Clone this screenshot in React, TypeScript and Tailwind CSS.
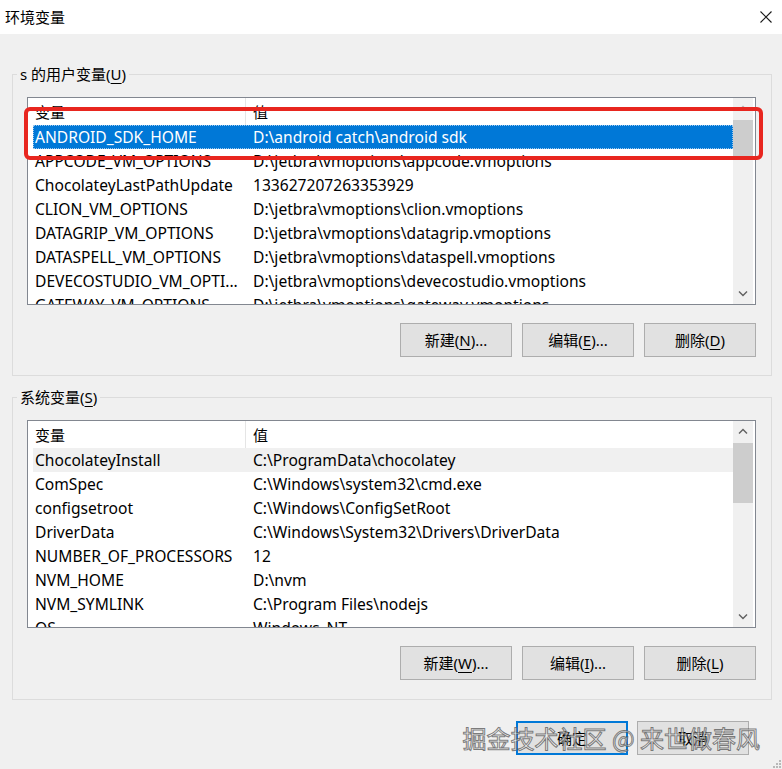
import clsx from 'clsx';

const userVars: [string, string][] = [
  ['ANDROID_SDK_HOME', 'D:\\android catch\\android sdk'],
  ['APPCODE_VM_OPTIONS', 'D:\\jetbra\\vmoptions\\appcode.vmoptions'],
  ['ChocolateyLastPathUpdate', '133627207263353929'],
  ['CLION_VM_OPTIONS', 'D:\\jetbra\\vmoptions\\clion.vmoptions'],
  ['DATAGRIP_VM_OPTIONS', 'D:\\jetbra\\vmoptions\\datagrip.vmoptions'],
  ['DATASPELL_VM_OPTIONS', 'D:\\jetbra\\vmoptions\\dataspell.vmoptions'],
  ['DEVECOSTUDIO_VM_OPTI...', 'D:\\jetbra\\vmoptions\\devecostudio.vmoptions'],
  ['GATEWAY_VM_OPTIONS', 'D:\\jetbra\\vmoptions\\gateway.vmoptions'],
];

const sysVars: [string, string][] = [
  ['ChocolateyInstall', 'C:\\ProgramData\\chocolatey'],
  ['ComSpec', 'C:\\Windows\\system32\\cmd.exe'],
  ['configsetroot', 'C:\\Windows\\ConfigSetRoot'],
  ['DriverData', 'C:\\Windows\\System32\\Drivers\\DriverData'],
  ['NUMBER_OF_PROCESSORS', '12'],
  ['NVM_HOME', 'D:\\nvm'],
  ['NVM_SYMLINK', 'C:\\Program Files\\nodejs'],
  ['OS', 'Windows_NT'],
];

const Chevron = ({ up, faint }: { up?: boolean; faint?: boolean }) => (
  <svg width="10" height="6" viewBox="0 0 10 6" className={faint ? 'text-[#b4b4b4]' : 'text-[#606060]'}>
    <path d={up ? 'M1 5.5L5 1.5L9 5.5' : 'M1 0.5L5 4.5L9 0.5'} fill="none" stroke="currentColor" strokeWidth="1.4" />
  </svg>
);

function VarList({
  rows,
  selected,
  hover,
  thumbTop,
  thumbHeight,
  faintUp,
}: {
  rows: [string, string][];
  selected?: number;
  hover?: number;
  thumbTop: number;
  thumbHeight: number;
  faintUp?: boolean;
}) {
  return (
    <div className="flex h-[208px] border border-[#828790] bg-white overflow-hidden">
      <div className="flex-1 min-w-0 pl-[5px]">
        {/* Header */}
        <div className="flex h-[27px]">
          <div className="w-[213px] border-r border-[#e5e5e5] pl-[2px] pt-[4px] leading-[20px]">变量</div>
          <div className="pl-[7px] pt-[4px] leading-[20px]">值</div>
        </div>

        {/* Rows */}
        {rows.map(([name, value], i) => (
          <div
            key={name}
            className={clsx(
              'flex h-[24px] items-center whitespace-nowrap leading-[20px] text-[15.6px]',
              i === selected && 'bg-[#0078d7] text-white outline-1 outline-dotted -outline-offset-1 outline-[#9cc8ef]',
              i === hover && 'bg-[#f0f0f0]'
            )}
          >
            <div className="w-[218px] shrink-0 pl-[2px]">{name}</div>
            <div className="pl-[2px]">{value}</div>
          </div>
        ))}
      </div>

      {/* Scrollbar */}
      <div className="w-[20px] mr-[2px] bg-[#f0f0f0] flex flex-col">
        <div className="h-[20px] flex items-center justify-center">
          <Chevron up faint={faintUp} />
        </div>
        <div className="flex-1">
          <div className="bg-[#cdcdcd]" style={{ marginTop: thumbTop, height: thumbHeight }} />
        </div>
        <div className="h-[20px] flex items-center justify-center">
          <Chevron />
        </div>
      </div>
    </div>
  );
}

const WinButton = ({ children, primary }: { children: React.ReactNode; primary?: boolean }) => (
  <button
    className={clsx(
      'w-[112px] h-[34px] bg-[#e1e1e1] flex items-center justify-center text-[15px] leading-none text-black',
      primary ? 'border-2 border-[#0078d7]' : 'border border-[#adadad]'
    )}
  >
    {children}
  </button>
);

const Key = ({ k }: { k: string }) => <u className="underline-offset-[3px] decoration-1">{k}</u>;

function Group({
  label,
  hotkey,
  rows,
  selected,
  hover,
  thumbTop,
  thumbHeight,
  faintUp,
  buttons,
  children,
  className = '',
}: {
  label: string;
  hotkey: string;
  rows: [string, string][];
  selected?: number;
  hover?: number;
  thumbTop: number;
  thumbHeight: number;
  faintUp?: boolean;
  buttons: [string, string, string][];
  children?: React.ReactNode;
  className?: string;
}) {
  return (
    <fieldset className={`border border-[#dcdcdc] ${className}`}>
      <legend className="ml-[4px] px-[3px] text-[15px] leading-[20px] text-black">
        {label}(<Key k={hotkey} />)
      </legend>
      <div className="pl-[14px] pr-[15px]">
        <div className="relative mt-[13px]">
          <VarList
            rows={rows}
            selected={selected}
            hover={hover}
            thumbTop={thumbTop}
            thumbHeight={thumbHeight}
            faintUp={faintUp}
          />
          {children}
        </div>
        <div className="flex justify-end gap-[10px] mt-[18px]">
          {buttons.map(([a, k, b]) => (
            <WinButton key={a + k}>
              {a}(<Key k={k} />){b}
            </WinButton>
          ))}
        </div>
      </div>
    </fieldset>
  );
}

export default function App() {
  return (
    <div className="w-[782px] h-[769px] bg-[#f0f0f0] overflow-hidden relative font-['Segoe_UI','Noto_Sans','Noto_Sans_CJK_SC',sans-serif] text-[15px] text-black">
      {/* Title bar */}
      <div className="h-[34px] bg-white flex items-center justify-between pl-[5px] pr-[10px]">
        <span className="text-[15px] leading-none">环境变量</span>
        <svg width="12" height="12" viewBox="0 0 12 12" className="text-[#1a1a1a]">
          <path d="M0.5 0.5L11.5 11.5M11.5 0.5L0.5 11.5" stroke="currentColor" strokeWidth="1.1" />
        </svg>
      </div>

      <div className="pl-[12px] pr-[10px] pt-[30px]">
        <Group
          label="s 的用户变量"
          hotkey="U"
          rows={userVars}
          selected={0}
          thumbTop={2}
          thumbHeight={38}
          faintUp
          buttons={[
            ['新建', 'N', '...'],
            ['编辑', 'E', '...'],
            ['删除', 'D', ''],
          ]}
          className="pb-[18px]"
        >
          {/* red highlight mark */}
          <div className="absolute left-[-3px] top-[10px] w-[739px] h-[53px] border-4 border-[#e8261f] rounded-[6px]" />
        </Group>

        <Group
          label="系统变量"
          hotkey="S"
          rows={sysVars}
          hover={0}
          thumbTop={2}
          thumbHeight={60}
          buttons={[
            ['新建', 'W', '...'],
            ['编辑', 'I', '...'],
            ['删除', 'L', ''],
          ]}
          className="mt-[11px] pb-[19px]"
        />
      </div>

      {/* Bottom buttons */}
      <div className="relative flex justify-end gap-[9px] pr-[33px] mt-[21px]">
        <WinButton primary>确定</WinButton>
        <WinButton>取消</WinButton>
        <span className="absolute right-[22px] top-[1px] text-[24px] leading-[32px] text-white/60 [-webkit-text-stroke:1px_rgba(70,70,70,0.7)] font-['Noto_Sans_CJK_SC',sans-serif] whitespace-nowrap">
          掘金技术社区 @ 来世做春风
        </span>
      </div>

      {/* resize grip */}
      <svg width="8" height="8" viewBox="0 0 8 8" className="absolute right-[1px] bottom-[1px] text-[#b8b8b8]">
        <rect x="6" y="0" width="2" height="2" fill="currentColor" />
        <rect x="3" y="3" width="2" height="2" fill="currentColor" />
        <rect x="6" y="3" width="2" height="2" fill="currentColor" />
        <rect x="0" y="6" width="2" height="2" fill="currentColor" />
        <rect x="3" y="6" width="2" height="2" fill="currentColor" />
        <rect x="6" y="6" width="2" height="2" fill="currentColor" />
      </svg>
    </div>
  );
}
